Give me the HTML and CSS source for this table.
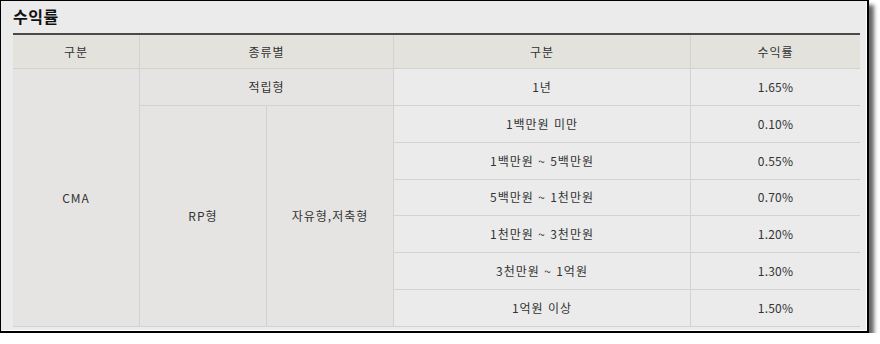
FILE: index.html
```html
<!DOCTYPE html>
<html lang="ko">
<head>
<meta charset="utf-8">
<link rel="stylesheet" href="styles.css">
</head>
<body>
<div class="frame">
  <h2 class="title">수익률</h2>
  <div class="grid">
    <div class="c hd c1">구분</div>
    <div class="c hd c23">종류별</div>
    <div class="c hd c4">구분</div>
    <div class="c hd c5">수익률</div>

    <div class="c side cma">CMA</div>
    <div class="c side c23">적립형</div>
    <div class="c c4">1년</div>
    <div class="c c5 num">1.65%</div>

    <div class="c side rp">RP형</div>
    <div class="c side free">자유형,저축형</div>
    <div class="c c4">1백만원 미만</div>
    <div class="c c5 num">0.10%</div>
    <div class="c c4">1백만원 ~ 5백만원</div>
    <div class="c c5 num">0.55%</div>
    <div class="c c4">5백만원 ~ 1천만원</div>
    <div class="c c5 num">0.70%</div>
    <div class="c c4">1천만원 ~ 3천만원</div>
    <div class="c c5 num">1.20%</div>
    <div class="c c4">3천만원 ~ 1억원</div>
    <div class="c c5 num">1.30%</div>
    <div class="c c4">1억원 이상</div>
    <div class="c c5 num">1.50%</div>
  </div>
</div>
</body>
</html>
```
FILE: styles.css
```css
html, body {
  margin: 0;
  padding: 0;
  background: #ffffff;
}
body {
  font-family: "Noto Sans CJK KR", "Noto Sans", sans-serif;
  color: #333333;
}
.frame {
  box-sizing: border-box;
  width: 869px;
  height: 333px;
  border: 1px solid #000;
  border-right-width: 2px;
  border-bottom-width: 2px;
  background: #ebebeb;
  box-shadow: inset -1px -1px 0 #ffffff, 5px 5px 4px rgba(0, 0, 0, 0.6);
  padding: 4px 0 0 12px;
}
.title {
  margin: 0;
  height: 28px;
  font-size: 16px;
  line-height: 22px;
  font-weight: bold;
  color: #111;
  letter-spacing: 0.5px;
}
.grid {
  display: grid;
  grid-template-columns: 126px 126px 126px 296px 169px;
  grid-template-rows: 33px repeat(7, 1fr);
  gap: 1px;
  width: 847px;
  height: 294px;
  background: #d2d2d2;
  border-top: 2px solid #4a4a4a;
  border-bottom: 1px solid #d2d2d2;
  box-sizing: border-box;
}
.c {
  display: flex;
  align-items: center;
  justify-content: center;
  font-size: 12px;
  line-height: 16px;
  letter-spacing: 1px;
  background: #ebebeb;
  color: #333;
}
.num {
  letter-spacing: 0.2px;
}
.hd {
  background: #e3e2dd;
  color: #333;
}
.side {
  background: #e6e4e2;
}
.c1 { grid-column: 1; }
.c23 { grid-column: 2 / 4; }
.c4 { grid-column: 4; }
.c5 { grid-column: 5; }
.cma { grid-column: 1; grid-row: 2 / 9; }
.rp { grid-column: 2; grid-row: 3 / 9; }
.free { grid-column: 3; grid-row: 3 / 9; }
```
